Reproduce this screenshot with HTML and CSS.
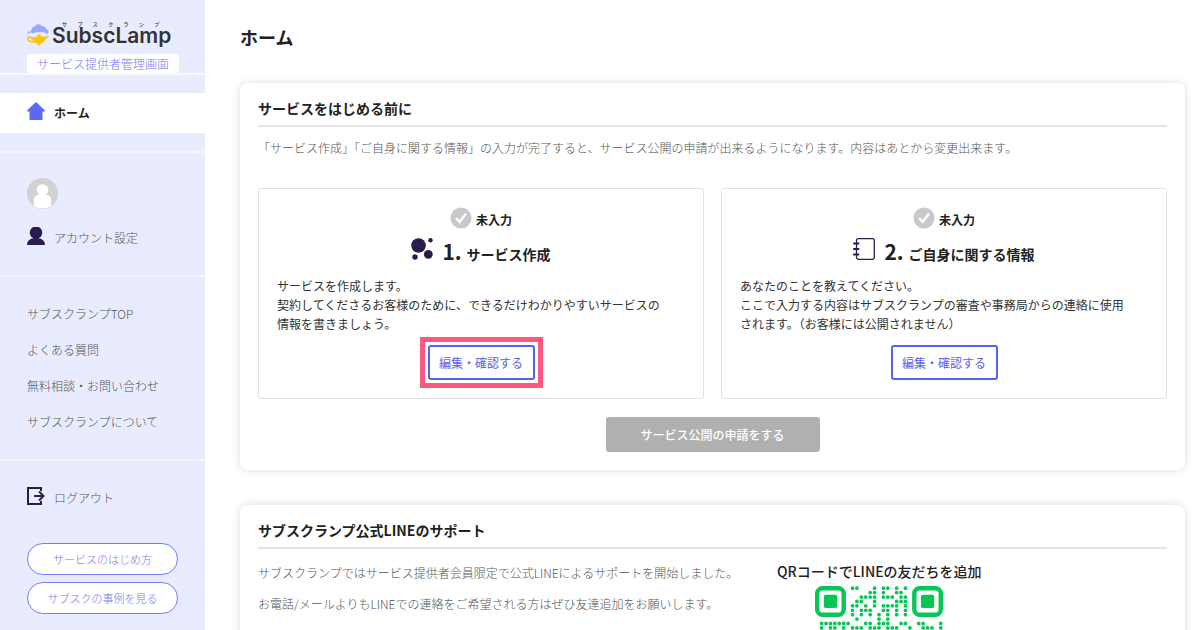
FILE: index.html
```html
<!DOCTYPE html>
<html lang="ja">
<head>
<meta charset="utf-8">
<meta name="viewport" content="width=device-width, initial-scale=1">
<title>ホーム | SubscLamp</title>
<link rel="stylesheet" href="styles.css">
</head>
<body>
<div class="layout">
  <aside class="sidebar">
    <header class="brand">
      <a class="logo" href="#">
        <svg class="logo-mark" viewBox="0 0 22 22" aria-hidden="true">
          <path fill="#94abff" d="M5.500 9.500a2.300 2.300 0 0 1-.7-4.300 3 3 0 0 1 3-2.700 4.200 4.200 0 0 1 7.500 0 3 3 0 0 1 3.700 2.500 2.600 2.600 0 0 1 1.800 4.500q-.7.8-1.800.3-1-2-3.400-1.500-2-1.200-3.600.2-2-1.300-3.700.4-1.500-.3-2.800.6z"/>
          <circle cx="2" cy="8.500" r="1.200" fill="#94abff"/>
          <path fill="#fdc500" d="M5 13.200q3.200.3 5-1 .2-2 2-2t2 2q2.300 1.200 4.200.4 1.800-1 3.800-.4-2.600 1.500-4.200 4-1.500 2.800-3.500 3.400L12 21.800 9.500 19.600q-3.500-.8-4.500-4z"/>
          <path fill="none" stroke="#fdc500" stroke-width="1.600" d="M7 17.600q-5 .6-6.200-2.400-.2-2.300 2-2.100 2 .4 3.200 2.500"/>
        </svg>
        <span class="logo-type">
          <span class="logo-kana"><span>サ</span><span>ブ</span><span>ス</span><span>ク</span><span>ラ</span><span>ン</span><span>プ</span></span>
          <span class="logo-name">SubscLamp</span>
        </span>
      </a>
      <p class="badge">サービス提供者管理画面</p>
    </header>
    <nav class="menu">
      <div class="menu-home">
        <a class="item current" href="#">
          <svg class="icon" viewBox="0 0 18 18" aria-hidden="true"><path fill="#5b69f2" d="M9 0 .3 8.300q-.6.9.4 1.200H2.500V17q0 1 1 1h11q1 0 1-1V9.500h1.800q1-.3.4-1.200z"/></svg>
          <span>ホーム</span>
        </a>
      </div>
      <div class="group account">
        <svg class="avatar" viewBox="0 0 32 32" role="img" aria-label="プロフィール画像">
          <circle cx="16" cy="16" r="16" fill="#d2d2d2"/>
          <path fill="#fff" d="M12.500 17.200a6 6 0 1 1 7 0q5.500.6 5.500 6v5.600a16 16 0 0 1-18 0v-5.600q0-5.400 5.500-6z"/>
        </svg>
        <a class="item" href="#">
          <svg class="icon" viewBox="0 0 18 18" aria-hidden="true"><path fill="#281d4c" d="M6.500 11.300a6.200 6.200 0 1 1 5 0Q18 12.500 18 18H0q0-5.500 6.500-6.700z"/></svg>
          <span>アカウント設定</span>
        </a>
      </div>
      <div class="group links">
        <a href="#">サブスクランプTOP</a>
        <a href="#">よくある質問</a>
        <a href="#">無料相談・お問い合わせ</a>
        <a href="#">サブスクランプについて</a>
      </div>
      <div class="group leave">
        <a class="item" href="#">
          <svg class="icon" viewBox="0 0 18 18" aria-hidden="true"><path fill="none" stroke="#281d4c" stroke-width="2" d="M14 4V1H1v16h13v-3M7 9h10M12 4.500 16.500 9 12 13.500"/></svg>
          <span>ログアウト</span>
        </a>
        <div class="guides">
          <a class="pill" href="#">サービスのはじめ方</a>
          <a class="pill" href="#">サブスクの事例を見る</a>
        </div>
      </div>
    </nav>
  </aside>

  <main class="main">
    <h1 class="page-title">ホーム</h1>

    <section class="card">
      <h2 class="card-title">サービスをはじめる前に</h2>
      <p class="lead">「サービス作成」「ご自身に関する情報」の入力が完了すると、サービス公開の申請が出来るようになります。内容はあとから変更出来ます。</p>
      <div class="steps">
        <article class="step">
          <p class="status">
            <svg class="check" viewBox="0 0 22 22" aria-hidden="true"><circle cx="11" cy="11" r="10.500" fill="#c9c9c9"/><path fill="none" stroke="#fff" stroke-width="2.400" d="m6 11 3.600 3.900L16 6.500"/></svg>
            <span>未入力</span>
          </p>
          <h3 class="step-title">
            <svg class="step-icon" viewBox="0 0 22 22" aria-hidden="true"><g fill="#281d4c"><circle cx="7.500" cy="7.500" r="7.300"/><circle cx="19.500" cy="2.300" r="2.200"/><circle cx="17.300" cy="16.300" r="4.400"/><circle cx="4" cy="19" r="2.700"/></g></svg>
            <span class="number">1.</span><span>サービス作成</span>
          </h3>
          <p class="step-text">サービスを作成します。<br>契約してくださるお客様のために、できるだけわかりやすいサービスの<br>情報を書きましょう。</p>
          <button class="edit highlighted" type="button">編集・確認する</button>
        </article>
        <article class="step">
          <p class="status">
            <svg class="check" viewBox="0 0 22 22" aria-hidden="true"><circle cx="11" cy="11" r="10.500" fill="#c9c9c9"/><path fill="none" stroke="#fff" stroke-width="2.400" d="m6 11 3.600 3.900L16 6.500"/></svg>
            <span>未入力</span>
          </p>
          <h3 class="step-title">
            <svg class="step-icon" viewBox="0 0 22 22" aria-hidden="true"><g fill="none" stroke="#281d4c"><rect x="3.500" y=".7" width="17.800" height="20.600" rx="1.800" stroke-width="1.300"/><path stroke-width="2" stroke-linecap="round" d="M1 5.500h4.500M1 11h4.500M1 16.500h4.500"/></g></svg>
            <span class="number">2.</span><span>ご自身に関する情報</span>
          </h3>
          <p class="step-text">あなたのことを教えてください。<br>ここで入力する内容はサブスクランプの審査や事務局からの連絡に使用<br>されます。（お客様には公開されません）</p>
          <button class="edit" type="button">編集・確認する</button>
        </article>
      </div>
      <button class="apply" type="button" disabled>サービス公開の申請をする</button>
    </section>

    <section class="card">
      <h2 class="card-title">サブスクランプ公式LINEのサポート</h2>
      <div class="support">
        <div class="support-text">
          <p>サブスクランプではサービス提供者会員限定で公式LINEによるサポートを開始しました。</p>
          <p>お電話/メールよりもLINEでの連絡をご希望される方はぜひ友達追加をお願いします。</p>
        </div>
        <div class="friend">
          <h3 class="friend-title">QRコードでLINEの友だちを追加</h3>
          <svg class="qr" viewBox="0 0 29 29" role="img" aria-label="LINE 友だち追加 QRコード">
            <g fill="none" stroke="#06c755">
              <rect x=".5" y=".5" width="6" height="6" rx="1.200"/>
              <rect x="22.500" y=".5" width="6" height="6" rx="1.200"/>
              <rect x=".5" y="22.500" width="6" height="6" rx="1.200"/>
            </g>
            <g fill="#06c755">
              <rect x="2" y="2" width="3" height="3" rx=".4"/>
              <rect x="24" y="2" width="3" height="3" rx=".4"/>
              <rect x="2" y="24" width="3" height="3" rx=".4"/>
            </g>
            <path transform="translate(.5 .5)" fill="none" stroke="#06c755" stroke-width=".86" stroke-linecap="round" d="M8 0h0M9 0h0M13 0h0M15 0h0M16 0h0M18 0h0M20 0h0M12 1h0M13 1h0M15 1h0M18 1h0M19 1h0M10 2h0M11 2h0M12 2h0M13 2h0M15 2h0M16 2h0M17 2h0M19 2h0M20 2h0M9 3h0M10 3h0M13 3h0M18 3h0M19 3h0M20 3h0M8 4h0M9 4h0M11 4h0M13 4h0M15 4h0M16 4h0M17 4h0M18 4h0M20 4h0M8 5h0M10 5h0M11 5h0M12 5h0M15 5h0M16 5h0M18 5h0M20 5h0M8 6h0M10 6h0M12 6h0M14 6h0M16 6h0M18 6h0M20 6h0M9 7h0M14 7h0M16 7h0M1 8h0M2 8h0M3 8h0M4 8h0M5 8h0M6 8h0M7 8h0M11 8h0M12 8h0M14 8h0M15 8h0M16 8h0M19 8h0M20 8h0M23 8h0M24 8h0M28 8h0M1 9h0M3 9h0M4 9h0M6 9h0M8 9h0M9 9h0M10 9h0M12 9h0M13 9h0M14 9h0M16 9h0M17 9h0M18 9h0M21 9h0M24 9h0M25 9h0M26 9h0M28 9h0"/>
          </svg>
        </div>
      </div>
    </section>
  </main>
</div>
</body>
</html>
```
FILE: styles.css
```css
* {
  box-sizing: border-box;
}

body,
h1,
h2,
h3,
p {
  margin: 0;
}

body {
  color: #222;
  background: #fff;
  font-family: "Noto Sans CJK JP", "Noto Sans", sans-serif;
  font-size: 12px;
  line-height: 18px;
}

a {
  color: inherit;
  text-decoration: none;
}

button {
  font: inherit;
  cursor: pointer;
}

svg {
  display: block;
  flex: none;
}

.layout {
  display: flex;
  height: 100vh;
  overflow: hidden;
}

/* Sidebar */

.sidebar {
  flex: none;
  width: 205px;
  background: #e9ecff;
  color: #555;
  font-weight: 300;
}

.brand {
  padding: 21px 27px 0;
  border-bottom: 2px solid #f8f9ff;
}

.logo {
  display: flex;
  gap: 3px;
  color: #333;
}

.logo-mark {
  width: 22px;
  height: 22px;
  margin-top: 3px;
}

.logo-kana {
  display: flex;
  justify-content: space-between;
  padding: 0 12px 0 10px;
  font-size: 5px;
  font-weight: 500;
  line-height: 6px;
}

.logo-name {
  display: block;
  font-family: Inter, sans-serif;
  font-size: 21px;
  font-weight: 600;
  line-height: 18px;
}

.badge {
  width: 152px;
  margin-top: 8px;
  border-radius: 3px;
  background: #fff;
  color: #7a78ee;
  line-height: 19px;
  text-align: center;
}

.menu-home {
  padding: 18px 0;
}

.item {
  display: flex;
  align-items: center;
  gap: 9px;
}

.icon {
  width: 18px;
  height: 18px;
  margin-bottom: 3px;
}

.current {
  padding: 9px 27px 10px;
  background: #fff;
  color: #222;
  font-weight: 700;
}

.group {
  border-top: 2px solid #f5f5f8;
  padding: 0 27px;
}

.account {
  display: grid;
  gap: 18px;
  padding-top: 25px;
  padding-bottom: 27px;
}

.avatar {
  width: 31px;
  height: 31px;
}

.links {
  display: grid;
  gap: 18px;
  padding-top: 28px;
  padding-bottom: 28px;
}

.leave {
  padding-top: 26px;
}

.guides {
  display: grid;
  gap: 7px;
  margin-top: 35px;
}

.pill {
  border: 1px solid #7380f5;
  border-radius: 16px;
  background: #fff;
  color: #7a78ee;
  font-size: 11px;
  line-height: 30px;
  text-align: center;
}

/* Main column */

.main {
  flex: 1;
  min-width: 0;
  padding: 23px 15px 0 35px;
}

.page-title {
  font-size: 18px;
  font-weight: 700;
  line-height: 28px;
}

.card {
  margin-top: 32px;
  padding: 15px 18px 18px;
  border-radius: 8px;
  background: #fff;
  box-shadow: 0 0 8px rgba(0, 0, 0, 0.14);
}

.card + .card {
  margin-top: 35px;
}

.card-title {
  padding-bottom: 7px;
  border-bottom: 2px solid #e4e4e4;
  font-size: 14px;
  font-weight: 700;
  line-height: 20px;
}

.lead {
  margin-top: 12px;
  color: #555;
  font-weight: 300;
}

.steps {
  display: grid;
  grid-template-columns: 1fr 1fr;
  gap: 17px;
  margin-top: 31px;
}

.step {
  display: flex;
  flex-direction: column;
  align-items: center;
  padding: 18px;
  border: 1px solid #e2e2e2;
  border-radius: 3px;
}

.status {
  display: flex;
  align-items: flex-end;
  gap: 4px;
  font-weight: 700;
}

.check {
  width: 22px;
  height: 22px;
}

.step-title {
  display: flex;
  align-items: baseline;
  margin-top: 9px;
  font-size: 14px;
  font-weight: 700;
  line-height: 24px;
}

.step-icon {
  width: 22px;
  height: 22px;
}

.number {
  margin: 0 5px 0 9px;
  font-size: 21px;
}

.step-text {
  align-self: stretch;
  margin-top: 10px;
  color: #333;
  line-height: 19px;
}

.edit {
  width: 107px;
  height: 35px;
  margin-top: 12px;
  padding: 0;
  border: 2px solid #5364ee;
  border-radius: 3px;
  background: #fff;
  color: #5b60ee;
}

/* Square frame drawn around the button, over the card */
.highlighted {
  position: relative;
}

.highlighted::after {
  content: "";
  position: absolute;
  inset: -10px;
  border: 5px solid #fd5884;
  pointer-events: none;
}

.apply {
  display: block;
  width: 214px;
  height: 35px;
  margin: 18px auto 0;
  border: 0;
  border-radius: 3px;
  background: #b0b0b0;
  color: #fff;
  font-weight: 500;
}

.support {
  display: flex;
  gap: 22px;
  margin-top: 13px;
}

.support-text {
  flex: none;
  display: grid;
  align-content: start;
  gap: 13px;
  min-width: 497px;
  padding-top: 2px;
  color: #555;
  font-weight: 300;
}

.friend {
  display: grid;
  justify-items: center;
  align-content: start;
  gap: 6px;
}

.friend-title {
  font-size: 14px;
  font-weight: 500;
  line-height: 18px;
}

.qr {
  width: 128px;
  height: 128px;
}
```
